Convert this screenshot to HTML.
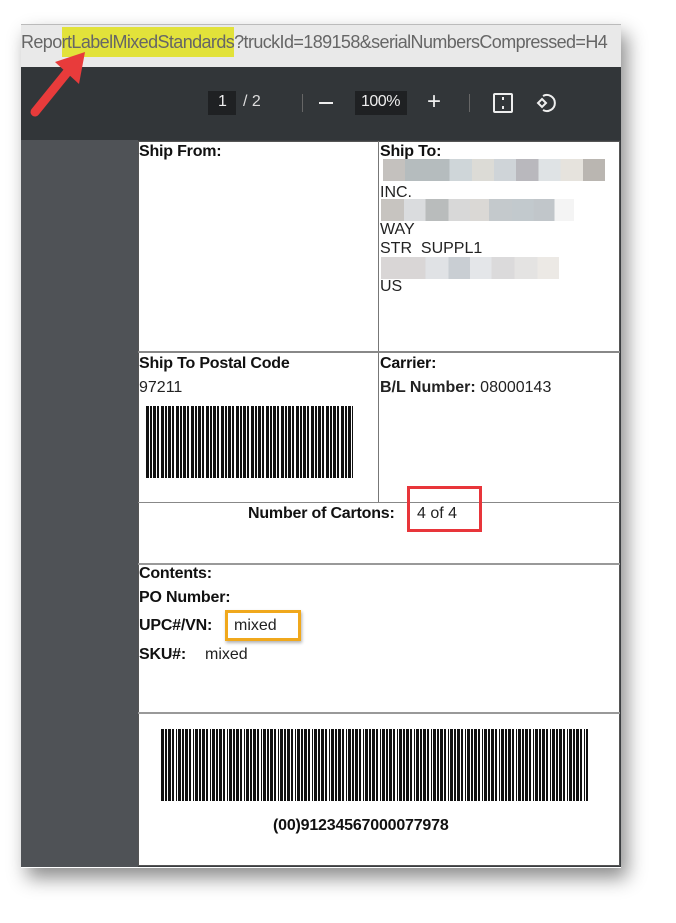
<!DOCTYPE html>
<html><head><meta charset="utf-8"><style>
*{margin:0;padding:0;box-sizing:border-box}
body{width:676px;height:923px;background:#fff;position:relative;overflow:hidden;font-family:"Liberation Sans",Arial,sans-serif}
.a{position:absolute}
.frame{left:21px;top:24px;width:600px;height:844px;box-shadow:6px 10px 18px rgba(0,0,0,.45)}
.b{font-weight:bold;font-size:16px;color:#111;letter-spacing:-0.2px}
.t{font-size:16px;color:#222}
.blur{position:absolute;height:22px}
</style></head><body>
<div class="a frame"></div>
<div class="a" style="left:21px;top:24px;width:600px;height:43px;background:#e9e9e9;border-top:1px solid #bbb"></div>
<div class="a" style="left:62px;top:27px;width:172px;height:30px;background:#e2e23a"></div>
<div class="a" style="left:21px;top:32px;font-size:18px;color:#666;white-space:nowrap;width:600px;overflow:hidden;letter-spacing:-0.6px">ReportLabelMixedStandards?truckId=189158&amp;serialNumbersCompressed=H4</div>
<div class="a" style="left:21px;top:67px;width:600px;height:73px;background:#323639"></div>
<div class="a" style="left:21px;top:140px;width:117px;height:727px;background:#4f5256"></div>
<div class="a" style="left:138px;top:140px;width:483px;height:727px;background:#3a3d40"></div>
<div class="a" style="left:208px;top:91px;width:28px;height:24px;background:#1f2123"></div>
<div class="a" style="left:218px;top:93px;color:#eee;font-size:16px">1</div>
<div class="a" style="left:243px;top:93px;color:#ddd;font-size:16px">/ 2</div>
<div class="a" style="left:302px;top:94px;width:1px;height:18px;background:#666"></div>
<div class="a" style="left:319px;top:102px;width:14px;height:2px;background:#eee"></div>
<div class="a" style="left:355px;top:91px;width:52px;height:24px;background:#1f2123"></div>
<div class="a" style="left:361px;top:93px;color:#eee;font-size:16px;letter-spacing:-0.5px">100%</div>
<div class="a" style="left:427px;top:88px;color:#eee;font-size:24px">+</div>
<div class="a" style="left:469px;top:94px;width:1px;height:18px;background:#666"></div>
<div class="a" style="left:493px;top:93px;width:20px;height:20px;border:2px solid #eee;border-radius:2px"></div>
<div class="a" style="left:502px;top:97px;width:2px;height:3px;background:#eee"></div>
<div class="a" style="left:502px;top:106px;width:2px;height:3px;background:#eee"></div>
<svg class="a" style="left:535px;top:91px" width="24" height="24" viewBox="0 0 24 24"><path d="M8 5 A8 8 0 1 1 8 19" fill="none" stroke="#eee" stroke-width="2"/><path d="M7 8 L11 12 L7 16 L3 12 Z" fill="none" stroke="#eee" stroke-width="2"/></svg>
<svg class="a" style="left:25px;top:48px" width="70" height="72" viewBox="0 0 70 72"><path d="M10 64 L44 22" stroke="#e83b3b" stroke-width="9" stroke-linecap="round"/><path d="M60 4 L30 14 L54 36 Z" fill="#e83b3b"/></svg>
<div class="a" style="left:138px;top:141px;width:482px;height:725px;background:#fff;border:1px solid #555"></div>
<div class="a" style="left:378px;top:141px;width:1px;height:362px;background:#777"></div>
<div class="a" style="left:138px;top:351px;width:482px;height:2px;background:#888"></div>
<div class="a" style="left:138px;top:502px;width:482px;height:1px;background:#888"></div>
<div class="a" style="left:138px;top:563px;width:482px;height:2px;background:#999"></div>
<div class="a" style="left:138px;top:712px;width:482px;height:2px;background:#999"></div>
<div class="a b" style="left:139px;top:143px">Ship From:</div>
<div class="a b" style="left:380px;top:143px">Ship To:</div>
<div class="blur" style="left:383px;top:159px;width:222px;background:linear-gradient(90deg,#c4c1be 0 10%,#b5bcbe 10% 30%,#cfd6d9 30% 40%,#dcdbd6 40% 50%,#cfd4d8 50% 60%,#b9b8bd 60% 70%,#dfe3e5 70% 80%,#e6e3dd 80% 90%,#bab6b1 90% 100%)"></div>
<div class="a t" style="left:380px;top:184px">INC.</div>
<div class="blur" style="left:381px;top:199px;width:193px;background:linear-gradient(90deg,#c7c4c0 0 12%,#dadcde 12% 23%,#b9bcbc 23% 35%,#d8d8d8 35% 46%,#dad8d5 46% 56%,#c4c9cc 56% 68%,#c2c9cd 68% 79%,#c1c6ca 79% 90%,#f4f4f4 90% 100%)"></div>
<div class="a t" style="left:380px;top:221px">WAY</div>
<div class="a t" style="left:380px;top:240px">STR&nbsp; SUPPL1</div>
<div class="blur" style="left:381px;top:257px;width:178px;background:linear-gradient(90deg,#d9d6d6 0 25%,#e0e2e5 25% 38%,#c9ced3 38% 50%,#e4e6e9 50% 62%,#dbdadb 62% 75%,#e4e3e2 75% 88%,#ece9e5 88% 100%)"></div>
<div class="a t" style="left:380px;top:278px">US</div>
<div class="a b" style="left:139px;top:355px">Ship To Postal Code</div>
<div class="a t" style="left:139px;top:379px">97211</div>
<div class="a" style="left:146px;top:406px;width:207px;height:72px;background:repeating-linear-gradient(90deg,#111 0 3px,#fff 3px 4px,#111 4px 6px,#fff 6px 7px,#111 7px 10px,#fff 10px 11px,#111 11px 13px,#fff 13px 15px)"></div>
<div class="a b" style="left:380px;top:355px">Carrier:</div>
<div class="a t" style="left:380px;top:379px"><b>B/L Number:</b> 08000143</div>
<div class="a b" style="left:248px;top:505px">Number of Cartons:</div>
<div class="a t" style="left:417px;top:505px">4 of 4</div>
<div class="a" style="left:407px;top:486px;width:75px;height:46px;border:3px solid #e8353a"></div>
<div class="a b" style="left:139px;top:565px">Contents:</div>
<div class="a b" style="left:139px;top:589px">PO Number:</div>
<div class="a b" style="left:139px;top:617px">UPC#/VN:</div>
<div class="a t" style="left:234px;top:617px">mixed</div>
<div class="a" style="left:225px;top:610px;width:76px;height:31px;border:3px solid #f0a81c;box-shadow:1px 2px 3px rgba(0,0,0,.3)"></div>
<div class="a b" style="left:139px;top:646px">SKU#:</div>
<div class="a t" style="left:205px;top:646px">mixed</div>
<div class="a" style="left:161px;top:729px;width:427px;height:72px;background:repeating-linear-gradient(90deg,#111 0 3px,#fff 3px 4px,#111 4px 6px,#fff 6px 7px,#111 7px 10px,#fff 10px 11px,#111 11px 13px,#fff 13px 15px,#111 15px 16px,#fff 16px 17px)"></div>
<div class="a b" style="left:273px;top:817px">(00)91234567000077978</div>
</body></html>
